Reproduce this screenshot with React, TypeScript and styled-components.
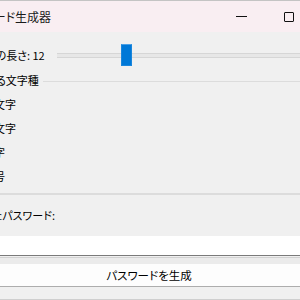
import React from "react";
import styled, { createGlobalStyle } from "styled-components";

const GlobalStyle = createGlobalStyle`
  html, body { margin: 0; padding: 0; background: #f0f0f0; overflow: hidden; }
  #root { width: 300px; height: 300px; }
`;

const FONT = `"Noto Sans CJK JP", "Noto Sans", sans-serif`;

const Viewport = styled.div`
  width: 300px;
  height: 300px;
  overflow: hidden;
  background: #f0f0f0;
  border-top: 1px solid #c4c4c4;
  box-sizing: border-box;
`;

const Window = styled.div`
  width: 418px;
  margin-left: -60px;
  font-family: ${FONT};
  font-feature-settings: "palt";
  color: #000;
`;

const TitleBar = styled.div`
  height: 31px;
  background: #f9eef2;
  display: flex;
  align-items: center;
`;

const TitleText = styled.div`
  flex: 1;
  padding-left: 21px;
  font-size: 12px;
  line-height: 31px;
  color: #1a1a1a;
`;

const CaptionButton = styled.div`
  width: 46px;
  height: 31px;
  display: flex;
  align-items: center;
  justify-content: center;
`;

const MinGlyph = styled.div`
  width: 11px;
  height: 1px;
  background: #111;
  margin-right: 3px;
`;

const MaxGlyph = styled.div`
  width: 10px;
  height: 10px;
  box-sizing: border-box;
  border: 1px solid #111;
  border-radius: 1px;
`;

const CloseGlyph = styled.div`
  font-size: 14px;
  color: #111;
`;

const Body = styled.div`
  display: flex;
  flex-direction: column;
`;

const SliderRow = styled.div`
  display: flex;
  align-items: center;
  height: 22px;
  margin-top: 12px;
  padding-left: 6px;
  padding-right: 3px;
  gap: 12px;
`;

const Label = styled.div`
  font-size: 11px;
  line-height: 16px;
  white-space: nowrap;
`;

const Track = styled.div`
  flex: 1;
  position: relative;
  height: 22px;
  display: flex;
  align-items: center;
`;

const Groove = styled.div`
  width: 100%;
  height: 5px;
  box-sizing: border-box;
  background: #e7e7e7;
  border-top: 1px solid #d6d6d6;
  border-bottom: 1px solid #d6d6d6;
`;

const Thumb = styled.div`
  position: absolute;
  top: 0;
  width: 11px;
  height: 22px;
  box-sizing: border-box;
  background: #0078d7;
  border: 1px solid #1a86dc;
  border-top-color: #4aa0e6;
`;

const Group = styled.section`
  margin: 6px 2px 0 22px;
  display: flex;
  flex-direction: column;
`;

const GroupHeader = styled.div`
  display: flex;
  align-items: center;
  height: 16px;
  gap: 4px;
  padding-left: 12px;
`;

const Rule = styled.div`
  flex: 1;
  height: 1px;
  background: #dcdcdc;
  margin-top: 2px;
`;

const Options = styled.div`
  display: flex;
  flex-direction: column;
  gap: 8px;
  padding: 8px 0 9px 4px;
  border-bottom: 2px solid #dcdcdc;
`;

const CheckRow = styled.label`
  display: flex;
  align-items: center;
  gap: 4px;
  height: 16px;
  font-size: 11px;
`;

const Box = styled.span`
  width: 13px;
  height: 13px;
  box-sizing: border-box;
  border: 1px solid #333;
  background: #fff;
  font-size: 10px;
  line-height: 11px;
  text-align: center;
`;

const ResultLabel = styled(Label)`
  margin-top: 12px;
  padding-left: 9px;
`;

const Entry = styled.div`
  margin-top: 13px;
  height: 19px;
  background: #fff;
  border-bottom: 1px solid #7a7a7a;
`;

const Button = styled.div`
  margin-top: 1px;
  height: 30px;
  box-sizing: border-box;
  border-top: 1px solid #d2d2d2;
  border-bottom: 1px solid #adadad;
  background: #ebebeb;
  padding-top: 6px;
  display: flex;
  flex-direction: column;
`;

const ButtonFace = styled.div`
  flex: 1;
  background: #fdfdfd;
  display: flex;
  align-items: center;
  justify-content: center;
  font-size: 11.5px;
`;

const Footer = styled.div`
  height: 12px;
  border-bottom: 1px solid #cfcfcf;
`;

const options = [
  { label: "大文字", checked: true },
  { label: "小文字", checked: true },
  { label: "数字", checked: true },
  { label: "記号", checked: false },
];

export default function App() {
  const value = 12;
  const min = 4;
  const max = 40;
  const frac = (value - min) / (max - min);
  return (
    <>
      <GlobalStyle />
      <Viewport>
        <Window>
          <TitleBar>
            <TitleText>パスワード生成器</TitleText>
            <CaptionButton><MinGlyph /></CaptionButton>
            <CaptionButton><MaxGlyph /></CaptionButton>
            <CaptionButton><CloseGlyph>✕</CloseGlyph></CaptionButton>
          </TitleBar>
          <Body>
            <SliderRow>
              <Label>パスワードの長さ: {value}</Label>
              <Track>
                <Groove />
                <Thumb style={{ left: `calc((100% - 11px) * ${frac})` }} />
              </Track>
            </SliderRow>
            <Group>
              <GroupHeader>
                <Label>含める文字種</Label>
                <Rule />
              </GroupHeader>
              <Options>
                {options.map((o) => (
                  <CheckRow key={o.label}>
                    <Box>{o.checked ? "✓" : ""}</Box>
                    {o.label}
                  </CheckRow>
                ))}
              </Options>
            </Group>
            <ResultLabel>生成されたパスワード:</ResultLabel>
            <Entry />
            <Button>
              <ButtonFace>パスワードを生成</ButtonFace>
            </Button>
            <Footer />
          </Body>
        </Window>
      </Viewport>
    </>
  );
}
